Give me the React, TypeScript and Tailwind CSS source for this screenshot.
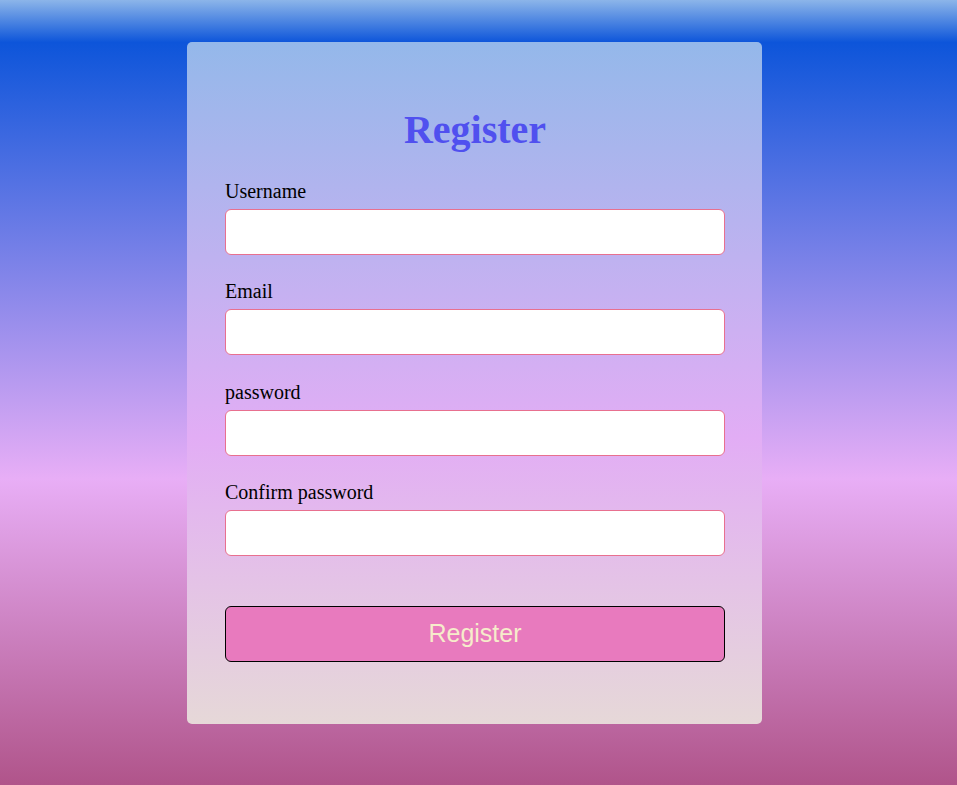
import React, { useState } from 'react';

const campos = [
  { nombre: 'username', label: 'Username', type: 'text' },
  { nombre: 'email', label: 'Email', type: 'email' },
  { nombre: 'password', label: 'password', type: 'password' },
  { nombre: 'confirm', label: 'Confirm password', type: 'password' },
];

export default function App() {
  const [valores, setValores] = useState<Record<string, string>>({});

  return (
    <div className="min-h-[785px] w-full bg-[linear-gradient(to_bottom,#8cb5e9_0%,#0d55da_5.4%,#e8aef6_61%,#b0548a_100%)] flex justify-center pr-[8px] font-['Liberation_Serif',serif]">
      <form
        className="mt-[42px] mb-[61px] w-[575px] rounded-[5px] bg-[linear-gradient(to_bottom,#94b8ea_0%,#e2adf5_58%,#e6d8d8_100%)] pl-[38px] pr-[37px] pt-[65px] pb-[61px] flex flex-col"
        onSubmit={(e) => e.preventDefault()}
      >
        <h1 className="text-center text-[40px] leading-[46px] font-bold text-[#5050ef]">Register</h1>

        <div className="mt-[27px] flex flex-col gap-[25.3px]">
          {campos.map((c) => (
            <div key={c.nombre} className="flex flex-col gap-[6px]">
              <label htmlFor={c.nombre} className="text-[20px] leading-[23px] text-black">
                {c.label}
              </label>
              <input
                id={c.nombre}
                type={c.type}
                value={valores[c.nombre] ?? ''}
                onChange={(e) => setValores({ ...valores, [c.nombre]: e.target.value })}
                className="h-[46px] w-full rounded-[6px] border border-[#e8708f] bg-white px-3 text-[18px] outline-none"
              />
            </div>
          ))}
        </div>

        <button
          type="submit"
          className="mt-[50px] h-[56px] w-full rounded-[6px] border border-black bg-[#e87abe] text-[25px] text-[#f6eccb] font-['Liberation_Sans',Arial,sans-serif]"
        >
          Register
        </button>
      </form>
    </div>
  );
}
